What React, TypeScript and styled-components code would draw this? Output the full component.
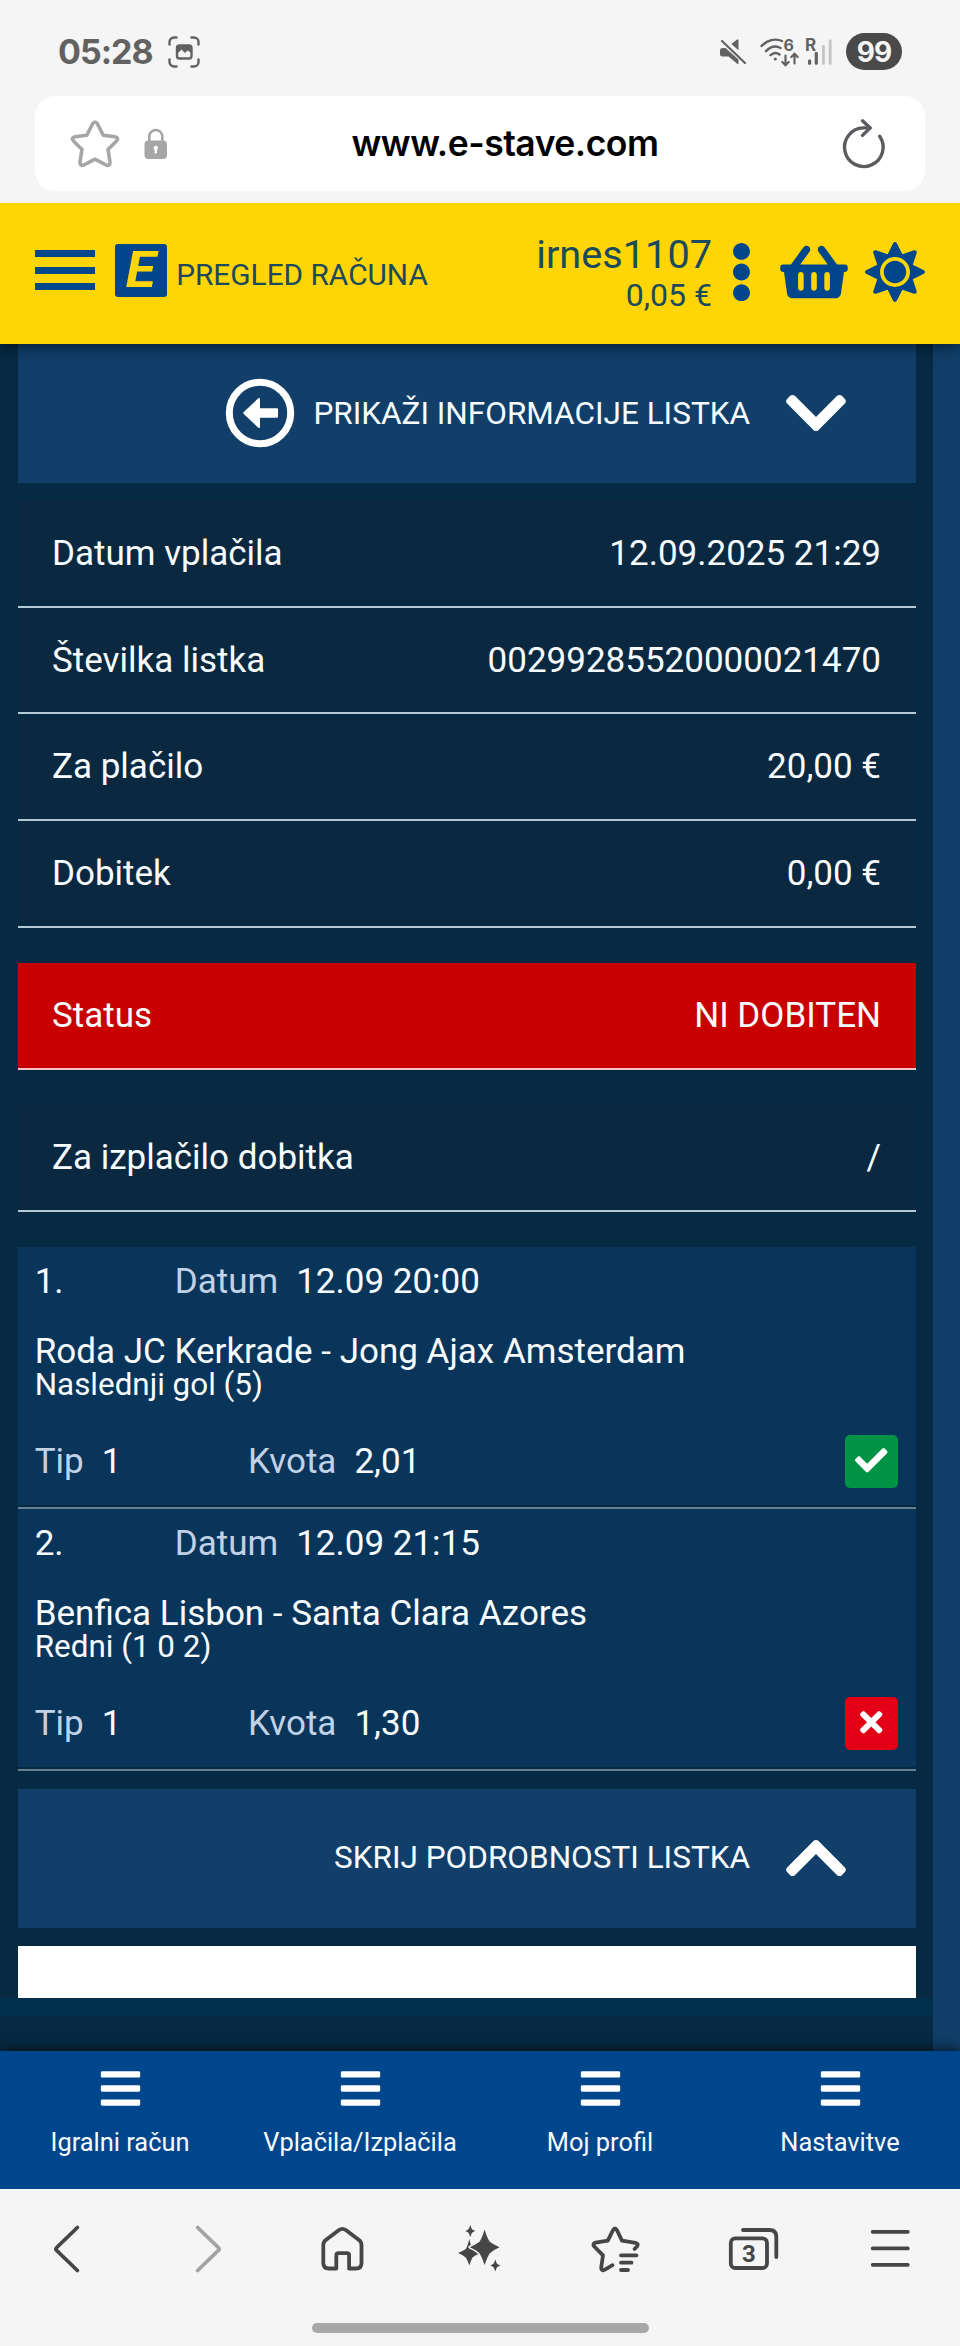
import React from "react";
import styled, { createGlobalStyle } from "styled-components";
import {
  FaBars,
  FaCheck,
  FaChevronDown,
  FaChevronUp,
  FaEllipsisV,
  FaShoppingBasket,
  FaSun,
  FaTimes,
} from "react-icons/fa";

const color = {
  chrome: "#f5f5f5",
  yellow: "#ffd505",
  blue: "#00468c",
  headerText: "#1a4a5c",
  page: "#062a43",
  row: "#0a2940",
  panel: "#113f69",
  card: "#0a355b",
  stripe: "#113f69",
  muted: "#c2d2e6",
};

const GlobalStyle = createGlobalStyle`
  *, *::before, *::after { box-sizing: border-box; }
  body { margin: 0; background: ${color.page}; }
  svg { display: block; flex: none; overflow: visible; }
`;

const Screen = styled.div`
  width: 960px;
  height: 2346px;
  display: flex;
  flex-direction: column;
  overflow: hidden;
  background: ${color.page};
  font-family: Roboto, "Liberation Sans", sans-serif;
  color: #f8fcff;
`;

/* ---------- Browser top ---------- */

const BrowserTop = styled.div`
  position: relative;
  z-index: 3;
  height: 203.33px;
  flex: none;
  background: ${color.chrome};
  font-family: Inter, "Liberation Sans", sans-serif;
`;

const StatusBar = styled.div`
  height: 96px;
  padding: 7px 58px 0;
  display: flex;
  align-items: center;
  color: #626262;
`;

const Clock = styled.span`
  width: 110px;
  font-size: 34px;
  font-weight: 700;
  letter-spacing: -1px;
  white-space: nowrap;
`;

const StatusIcons = styled.div`
  margin-left: auto;
  display: flex;
  align-items: center;
`;

const WifiSlot = styled.span`
  margin: 0 5px 0 13px;
`;

const Battery = styled.span`
  width: 56px;
  height: 37px;
  margin-left: 13px;
  border-radius: 19px;
  background: #4a4a4a;
  color: #f5f5f5;
  display: flex;
  align-items: center;
  justify-content: center;
  font-size: 28px;
  font-weight: 700;
  letter-spacing: -1px;
`;

const AddressBar = styled.div`
  height: 95px;
  margin: 0 35px;
  padding: 0 39px 0 35px;
  border-radius: 20px;
  background: #fff;
  display: flex;
  align-items: center;
`;

const LockSlot = styled.span`
  margin-left: 24px;
`;

const Address = styled.span`
  flex: 1;
  text-align: center;
  color: #000;
  font-size: 35.5px;
  font-weight: 600;
  letter-spacing: -0.5px;
`;

/* ---------- Site header ---------- */

const Header = styled.header`
  position: relative;
  z-index: 2;
  height: 140.33px;
  flex: none;
  padding: 0 35px;
  display: flex;
  align-items: center;
  background: ${color.yellow};
  color: ${color.headerText};
  box-shadow: 0 2px 14px rgba(0, 0, 0, 0.6);
`;

const MenuButton = styled.div`
  width: 60px;
  height: 40px;
  margin-top: -6px;
  display: flex;
  flex-direction: column;
  justify-content: space-between;
`;

const MenuBar = styled.span`
  height: 7px;
  background: ${color.blue};
`;

const Logo = styled.div`
  width: 52.5px;
  height: 53px;
  margin: -6px 9px 0 19.7px;
  border-radius: 3px;
  background: ${color.blue};
  color: ${color.yellow};
  display: flex;
  align-items: center;
  justify-content: center;
  font-size: 50px;
  font-weight: 700;
  font-style: italic;
  line-height: 53px;
`;

const LogoLetter = styled.span`
  display: block;
  transform: scaleX(1.1);
`;

const PageTitle = styled.span`
  font-size: 29.8px;
  line-height: 36px;
  padding-top: 3px;
  white-space: nowrap;
`;

const Account = styled.div`
  margin-left: auto;
  text-align: right;
  padding-top: 3px;
`;

const UserName = styled.div`
  font-size: 39.7px;
  line-height: 42px;
`;

const Balance = styled.div`
  font-size: 32px;
  line-height: 39px;
`;

const HeaderIcons = styled.div`
  display: flex;
  align-items: center;
  color: ${color.blue};
  margin: -2px 0 0 18px;
`;

const DotsIcon = styled(FaEllipsisV)`
  width: 23px;
  height: 60px;
`;

const BasketIcon = styled(FaShoppingBasket)`
  width: 68px;
  height: 60px;
  margin-left: 27px;
`;

const ThemeIcon = styled(FaSun)`
  width: 60px;
  height: 60px;
  margin-left: 17px;
`;

/* ---------- Ticket ---------- */

const Content = styled.main`
  flex: 1;
  min-height: 0;
  padding-right: 27px;
  background: ${color.stripe};
`;

const Ticket = styled.div`
  height: 100%;
  background: ${color.page};
`;

const TicketBody = styled.div`
  padding: 0 17px 0 18px;
`;

const ToggleBar = styled.div`
  height: 139.7px;
  padding-right: 70px;
  padding-bottom: 1px;
  display: flex;
  align-items: center;
  justify-content: flex-end;
  background: ${color.panel};
  font-size: 31.5px;
`;

const BackIcon = styled.svg`
  width: 70px;
  height: 70px;
  margin-right: 18px;
`;

const ChevronSlot = styled.span`
  width: 60px;
  margin-left: 36px;
  display: flex;
  justify-content: center;
  font-size: 70px;
  color: #fff;
`;

const Rows = styled.div<{ $top?: number }>`
  margin-top: ${(p) => p.$top ?? 35.3}px;
`;

const Row = styled.div<{ $lost?: boolean }>`
  height: 106.67px;
  padding: 0 35px 0 34px;
  display: flex;
  align-items: center;
  justify-content: space-between;
  background: ${(p) => (p.$lost ? "#c80000" : color.row)};
  border-bottom: 2px solid ${(p) => (p.$lost ? "#f3c3c8" : "#b4c8d8")};
  font-size: 35px;
`;

const Bets = styled.div`
  margin-top: 35px;
  margin-bottom: 18px;
`;

const Bet = styled.div`
  height: 262px;
  padding-bottom: 2px;
  border-bottom: 2px solid #66808f;
`;

const BetBody = styled.div`
  height: 258px;
  padding: 13px 18px 0 16.7px;
  background: ${color.card};
  font-size: 35px;
`;

const BetLine = styled.div`
  display: flex;
  align-items: center;
  height: 44px;
`;

const BetNumber = styled.span`
  width: 140px;
`;

const Field = styled.span<{ $width?: number }>`
  width: ${(p) => (p.$width ? `${p.$width}px` : "auto")};
  display: flex;
  gap: 18px;
  white-space: nowrap;
`;

const FieldLabel = styled.span`
  color: ${color.muted};
`;

const Teams = styled.div`
  margin-top: 30px;
  line-height: 36px;
`;

const Market = styled.div`
  font-size: 31.4px;
  line-height: 30px;
  margin-bottom: 40px;
`;

const Outcome = styled.span<{ $won: boolean }>`
  width: 53px;
  height: 53px;
  margin-left: auto;
  border-radius: 5px;
  display: flex;
  align-items: center;
  justify-content: center;
  padding-bottom: 3px;
  font-size: 32.5px;
  color: #fff;
  background: ${(p) => (p.$won ? "#009345" : "#e30016")};
`;

const WhiteStrip = styled.div`
  height: 52.5px;
  margin-top: 17.5px;
  background: #fff;
`;

const TicketEnd = styled.div`
  height: 17.6px;
  background: #00304d;
`;

/* ---------- Site bottom navigation ---------- */

const TabNav = styled.nav`
  position: relative;
  z-index: 2;
  height: 137.5px;
  flex: none;
  display: flex;
  background: ${color.blue};
  box-shadow: 0 0 14px rgba(0, 0, 0, 0.85);
`;

const TabItem = styled.div`
  flex: 1;
  padding-top: 15px;
  display: flex;
  flex-direction: column;
  align-items: center;
  gap: 16px;
  font-size: 25.4px;
  line-height: 30px;
`;

/* ---------- Browser bottom ---------- */

const BrowserBottom = styled.div`
  position: relative;
  z-index: 3;
  height: 157.5px;
  flex: none;
  display: flex;
  flex-direction: column;
  align-items: center;
  background: ${color.chrome};
  color: #464646;
`;

const Toolbar = styled.div`
  width: 100%;
  height: 121px;
  display: flex;
  align-items: center;
`;

const Tool = styled.span<{ $disabled?: boolean }>`
  flex: 1;
  display: flex;
  justify-content: center;
  color: ${(p) => (p.$disabled ? "#a3a3a3" : "inherit")};
`;

const ToolSvg = styled.svg`
  width: 60px;
  height: 60px;
  fill: none;
  stroke: currentColor;
  stroke-width: 3.8;
  stroke-linecap: round;
  stroke-linejoin: round;
`;

const Handle = styled.span`
  width: 337px;
  height: 10px;
  margin-top: 13.5px;
  border-radius: 5px;
  background: #a8a8a8;
`;

/* ---------- Drawings ---------- */

const ScreenshotIcon = () => (
  <svg width="32" height="32" viewBox="0 0 32 32" fill="none" stroke="#626262" strokeWidth="2.4" strokeLinecap="round">
    <path d="M1.5 8.5V6a4.5 4.5 0 0 1 4.5-4.5H8.5M23.5 1.5H26a4.5 4.5 0 0 1 4.5 4.5V8.5M30.5 23.5V26a4.5 4.5 0 0 1-4.5 4.5H23.5M8.5 30.5H6a4.5 4.5 0 0 1-4.5-4.5V23.5" />
    <rect x="9" y="9.5" width="14.5" height="13" rx="2.5" />
    <path d="M9 9.5H23.5V17L19.5 14.5L17 17L13.5 13.5L9 18Z" fill="#626262" stroke="none" />
  </svg>
);

const MuteIcon = () => (
  <svg width="28" height="28" viewBox="0 0 28 28" fill="#626262">
    <path d="M1 12.5q0-2.5 2.5-2.5H6.5L19.5 21.5V25.5L18.5 26L9.5 18.5H3.5q-2.5 0-2.5-2.5Z" />
    <path d="M12.3 6L18.5 1.2L19.5 1.7V12.2Z" />
    <path d="M3 3L26 25" fill="none" stroke="#626262" strokeWidth="2.2" strokeLinecap="round" />
  </svg>
);

const WifiIcon = () => (
  <svg width="40" height="30" viewBox="0 0 40 30" fill="none" stroke="#626262" strokeWidth="2.4" strokeLinecap="round">
    <path d="M1.5 9C7 3 15.500 1 22 4M6 14.2C10.5 9.5 16 8.5 20.5 11M10.5 18.2C13.5 15.5 17 15.5 19.5 17.5" />
    <circle cx="15.3" cy="22" r="1.6" fill="#626262" stroke="none" />
    <path d="M25.5 18.5V28M22.3 25L25.5 28.2L28.7 25M34.5 26.5V17M31.3 20L34.5 16.8L37.7 20" strokeWidth="2.2" />
    <text x="23.5" y="13.5" fontSize="16" fontWeight="700" fill="#626262" stroke="none">6</text>
  </svg>
);

const SignalIcon = () => (
  <svg width="28" height="30" viewBox="0 0 28 30">
    <text x="0" y="14" fontSize="17" fontWeight="700" fill="#626262">R</text>
    <rect x="3" y="22.5" width="3.2" height="5.2" rx="1.2" fill="#626262" />
    <rect x="9.7" y="15" width="3.2" height="12.7" rx="1.2" fill="#626262" />
    <rect x="17" y="8" width="2.8" height="19.7" rx="1.2" fill="#c4c4c4" />
    <rect x="23.8" y="2.5" width="2.8" height="25.2" rx="1.2" fill="#c4c4c4" />
  </svg>
);

const StarIcon = () => (
  <svg width="50" height="50" viewBox="0 0 50 50" fill="none" stroke="#a6a6a6" strokeWidth="3.6" strokeLinejoin="round">
    <path d="M22.5 5Q25 1 27.5 5L33.2 16.2L45 17.8Q49.5 19 46.3 22.3L38 30.5L40 43Q40 47.5 36 46L25 40.2L14 46Q10 47.5 10 43L12 30.5L3.7 22.3Q0.5 19 5 17.8L16.8 16.2Z" />
  </svg>
);

const LockIcon = () => (
  <svg width="24" height="32" viewBox="0 0 24 32">
    <path d="M5.3 14V8.5a6.5 6.5 0 0 1 13 0V14" fill="none" stroke="#a6a6a6" strokeWidth="2.6" />
    <rect x="0.5" y="12.5" width="22.5" height="18.5" rx="4" fill="#a6a6a6" />
    <path d="M9.6 20a2.2 2.2 0 1 1 4.4 0q0 1-1 1.8V25.5h-2.4V21.8q-1-.8-1-1.8Z" fill="#fff" />
  </svg>
);

const ReloadIcon = () => (
  <svg width="44" height="52" viewBox="0 0 44 52" fill="none" stroke="#5c5c60" strokeWidth="3.4" strokeLinecap="round" strokeLinejoin="round">
    <path d="M37.7 18.200A19.300 19.300 0 1 1 21.500 9.900H28" />
    <path d="M20.500 2.800L28.200 9.900L20.500 17.400" />
  </svg>
);

const BackArrow = () => (
  <BackIcon viewBox="0 0 70 70">
    <circle cx="35" cy="35" r="30.7" fill="none" stroke="#fff" strokeWidth="7" />
    <path
      d="M19.2 35L34 21V31.2H52V38.8H34V49Z"
      fill="#fff"
      stroke="#fff"
      strokeWidth="2"
      strokeLinejoin="round"
    />
  </BackIcon>
);

/* ---------- Data ---------- */

type Info = { label: string; value: string };

const summary: Info[] = [
  { label: "Datum vplačila", value: "12.09.2025 21:29" },
  { label: "Številka listka", value: "00299285520000021470" },
  { label: "Za plačilo", value: "20,00 €" },
  { label: "Dobitek", value: "0,00 €" },
];

const bets = [
  {
    date: "12.09 20:00",
    teams: "Roda JC Kerkrade - Jong Ajax Amsterdam",
    market: "Naslednji gol (5)",
    tip: "1",
    odds: "2,01",
    won: true,
  },
  {
    date: "12.09 21:15",
    teams: "Benfica Lisbon - Santa Clara Azores",
    market: "Redni (1 0 2)",
    tip: "1",
    odds: "1,30",
    won: false,
  },
];

const tabs = ["Igralni račun", "Vplačila/Izplačila", "Moj profil", "Nastavitve"];

const InfoRow = ({ label, value, lost }: Info & { lost?: boolean }) => (
  <Row $lost={lost}>
    <span>{label}</span>
    <span>{value}</span>
  </Row>
);

export default function App() {
  return (
    <Screen>
      <GlobalStyle />
      <BrowserTop>
        <StatusBar>
          <Clock>05:28</Clock>
          <ScreenshotIcon />
          <StatusIcons>
            <MuteIcon />
            <WifiSlot>
              <WifiIcon />
            </WifiSlot>
            <SignalIcon />
            <Battery>99</Battery>
          </StatusIcons>
        </StatusBar>
        <AddressBar>
          <StarIcon />
          <LockSlot>
            <LockIcon />
          </LockSlot>
          <Address>www.e-stave.com</Address>
          <ReloadIcon />
        </AddressBar>
      </BrowserTop>

      <Header>
        <MenuButton>
          <MenuBar />
          <MenuBar />
          <MenuBar />
        </MenuButton>
        <Logo>
          <LogoLetter>E</LogoLetter>
        </Logo>
        <PageTitle>PREGLED RAČUNA</PageTitle>
        <Account>
          <UserName>irnes1107</UserName>
          <Balance>0,05 €</Balance>
        </Account>
        <HeaderIcons>
          <DotsIcon />
          <BasketIcon />
          <ThemeIcon />
        </HeaderIcons>
      </Header>

      <Content>
        <Ticket>
          <TicketBody>
            <ToggleBar>
              <BackArrow />
              PRIKAŽI INFORMACIJE LISTKA
              <ChevronSlot>
                <FaChevronDown />
              </ChevronSlot>
            </ToggleBar>
            <Rows $top={17.7}>
              {summary.map((row) => (
                <InfoRow key={row.label} {...row} />
              ))}
            </Rows>
            <Rows>
              <InfoRow label="Status" value="NI DOBITEN" lost />
            </Rows>
            <Rows>
              <InfoRow label="Za izplačilo dobitka" value="/" />
            </Rows>
            <Bets>
              {bets.map((bet, i) => (
                <Bet key={bet.teams}>
                  <BetBody>
                    <BetLine>
                      <BetNumber>{i + 1}.</BetNumber>
                      <Field>
                        <FieldLabel>Datum</FieldLabel>
                        <span>{bet.date}</span>
                      </Field>
                    </BetLine>
                    <Teams>{bet.teams}</Teams>
                    <Market>{bet.market}</Market>
                    <BetLine>
                      <Field $width={213.3}>
                        <FieldLabel>Tip</FieldLabel>
                        <span>{bet.tip}</span>
                      </Field>
                      <Field>
                        <FieldLabel>Kvota</FieldLabel>
                        <span>{bet.odds}</span>
                      </Field>
                      <Outcome $won={bet.won}>{bet.won ? <FaCheck /> : <FaTimes />}</Outcome>
                    </BetLine>
                  </BetBody>
                </Bet>
              ))}
            </Bets>
            <ToggleBar>
              SKRIJ PODROBNOSTI LISTKA
              <ChevronSlot>
                <FaChevronUp />
              </ChevronSlot>
            </ToggleBar>
            <WhiteStrip />
          </TicketBody>
          <TicketEnd />
        </Ticket>
      </Content>

      <TabNav>
        {tabs.map((tab) => (
          <TabItem key={tab}>
            <FaBars size={45} color="#fff" />
            {tab}
          </TabItem>
        ))}
      </TabNav>

      <BrowserBottom>
        <Toolbar>
          <Tool>
            <ToolSvg>
              <path d="M38.4 8.5L17.7 28.5Q16.2 30 17.7 31.5L38.4 51.5" />
            </ToolSvg>
          </Tool>
          <Tool $disabled>
            <ToolSvg>
              <path d="M21.6 8.5L42.3 28.5Q43.8 30 42.3 31.5L21.6 51.5" />
            </ToolSvg>
          </Tool>
          <Tool>
            <ToolSvg>
              <path d="M23.3 49.5H16Q10.3 49.5 10.3 44V26q0-3 2.5-5L26 11q3.4-2.3 6.8 0L46 21q2.5 2 2.5 5V44q0 5.5-5.5 5.5H36.1V36.5q0-2.3-2.3-2.3h-8.2q-2.3 0-2.3 2.3Z" />
            </ToolSvg>
          </Tool>
          <Tool>
            <ToolSvg>
              <g fill="currentColor" stroke="none">
                <path d="M19.3 20Q21 27.5 22.5 30.5Q25 33 30.5 34.5Q25 36 22.5 38.5Q21 41 19.3 46.5Q17.5 41 15.8 38.5Q13 36 8 34Q13 32 15.8 30Q17.5 27.5 19.3 20Z" />
                <path
                  d="M34.6 10.5Q37 18.5 39.5 22.5Q43 25.5 49.5 28.2Q43 31 39.5 34.5Q37 38.5 34.6 46Q32.2 38.5 29.7 34.5Q26.5 31 19.8 28.2Q26.5 25.5 29.7 22.5Q32.2 18.5 34.6 10.5Z"
                  stroke={color.chrome}
                  strokeWidth="3"
                  paintOrder="stroke"
                />
                <path d="M20.3 6Q21.5 9.5 22 10.2Q22.7 11 25.3 12Q22.7 13 22 13.8Q21.5 14.5 20.3 18Q19.1 14.5 18.5 13.8Q17.8 13 15.3 12Q17.8 11 18.5 10.2Q19.1 9.5 20.3 6Z" />
                <path d="M45.3 40.5Q46.5 44 47 44.7Q47.7 45.5 50.3 46.5Q47.7 47.5 47 48.3Q46.5 49 45.3 52.5Q44.1 49 43.5 48.3Q42.8 47.5 40.3 46.5Q42.8 45.5 43.5 44.7Q44.1 44 45.3 40.5Z" />
              </g>
            </ToolSvg>
          </Tool>
          <Tool>
            <ToolSvg>
              <path d="M47.5 30L50 27.5Q52 24.5 48.5 23.8L35 21.7L29.9 11Q28 7.8 26.1 11L20.8 21.7L8.6 23.6Q5 24.5 7.3 27.5L16 36.3L14.2 48.5Q14.2 52.3 17.5 50.8L25.5 46.2" />
              <path d="M34 36.3H49.5M34 43.7H44.5M34 51H41" />
            </ToolSvg>
          </Tool>
          <Tool>
            <ToolSvg>
              <rect x="6.8" y="19.4" width="36.2" height="29.6" rx="4.5" />
              <path d="M19 11H45.5q6.8 0 6.8 6.8V38" />
              <text
                x="25"
                y="43"
                fontFamily="Roboto, sans-serif"
                fontSize="24"
                fontWeight="700"
                textAnchor="middle"
                fill="currentColor"
                stroke="none"
              >
                3
              </text>
            </ToolSvg>
          </Tool>
          <Tool>
            <ToolSvg>
              <path d="M11.7 12.8H46.8M11.7 29.4H46.8M11.7 45.8H46.8" />
            </ToolSvg>
          </Tool>
        </Toolbar>
        <Handle />
      </BrowserBottom>
    </Screen>
  );
}
